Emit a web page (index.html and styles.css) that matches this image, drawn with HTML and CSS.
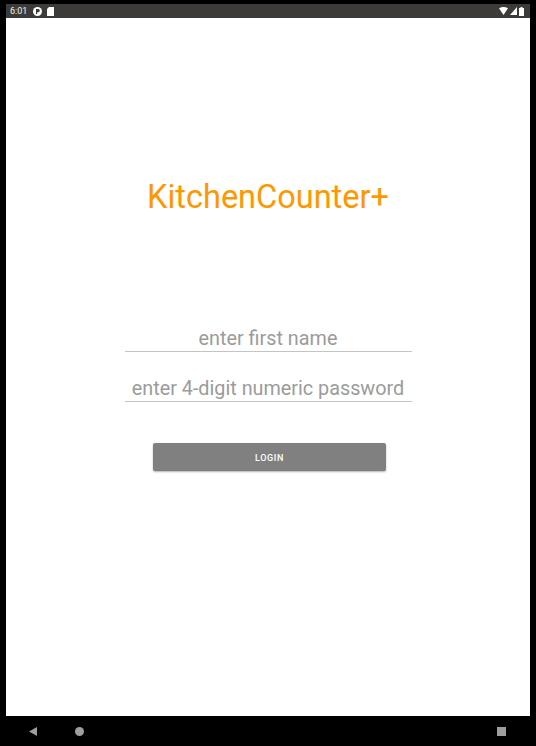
FILE: index.html
```html
<!DOCTYPE html>
<html>
<head>
<meta charset="utf-8">
<link rel="stylesheet" href="styles.css">
</head>
<body>
<div class="device">
  <div class="screen">
    <div class="statusbar">
      <div class="status-left">
        <span class="time">6:01</span>
        <svg class="ic" width="9" height="9" viewBox="0 0 9 9"><circle cx="4.5" cy="4.5" r="4.5" fill="#fff"/><path d="M3 2h2.2a1.6 1.6 0 0 1 0 3.2H4.2V7H3z" fill="#3c3b37"/></svg>
        <svg class="ic" width="7" height="9" viewBox="0 0 7 9"><path d="M2 0h5v9H0V2z" fill="#fff"/></svg>
      </div>
      <div class="status-right">
        <svg width="9" height="8" viewBox="0 0 9 8"><path d="M0 1.2Q4.5-1.2 9 1.2L4.5 8z" fill="#fff"/></svg>
        <svg width="7" height="8" viewBox="0 0 7 8"><path d="M7 0V8H0z" fill="#fff"/></svg>
        <svg width="5" height="9" viewBox="0 0 5 9"><path d="M1.5 0h2v1H5v8H0V1h1.5z" fill="#fff"/></svg>
      </div>
    </div>
    <div class="content">
      <h1 class="title">KitchenCounter+</h1>
      <div class="form">
        <input class="field" type="text" placeholder="enter first name">
        <input class="field" type="password" placeholder="enter 4-digit numeric password">
        <button class="login">LOGIN</button>
      </div>
    </div>
  </div>
  <div class="navbar">
    <svg class="nav-back" width="8" height="9" viewBox="0 0 8 9"><path d="M8 0V9L0 4.5z" fill="#9e9e9e"/></svg>
    <span class="nav-home"></span>
    <span class="nav-spacer"></span>
    <span class="nav-recent"></span>
  </div>
</div>
</body>
</html>
```
FILE: styles.css
```css
html, body {
  margin: 0;
  padding: 0;
  background: #000;
}
body {
  width: 536px;
  height: 746px;
  overflow: hidden;
  font-family: Roboto, "Noto Sans", sans-serif;
}
.device {
  display: flex;
  flex-direction: column;
  height: 746px;
}
.screen {
  margin: 4px 6px 0 6px;
  height: 712px;
  display: flex;
  flex-direction: column;
  background: #fff;
}
.statusbar {
  height: 14px;
  background: #3c3b37;
  display: flex;
  align-items: center;
  justify-content: space-between;
  padding: 0 6px 0 4px;
}
.status-left, .status-right {
  display: flex;
  align-items: center;
}
.status-left { gap: 5px; }
.status-right { gap: 2px; }
.time {
  color: #f2f2f2;
  font-size: 9px;
  line-height: 14px;
  margin-right: 1px;
}
.content {
  flex: 1;
  display: flex;
  flex-direction: column;
  align-items: center;
}
.title {
  margin: 160px 0 0 0;
  font-size: 32.5px;
  line-height: 38px;
  font-weight: 400;
  color: #ff9800;
}
.form {
  margin-top: 111px;
  display: flex;
  flex-direction: column;
  align-items: center;
}
.field {
  width: 287px;
  box-sizing: border-box;
  border: none;
  border-bottom: 1px solid #c4c4c4;
  padding: 0 0 1px 0;
  margin: 0 0 25px 0;
  font-family: Roboto, sans-serif;
  font-size: 19.8px;
  line-height: 23px;
  height: 25px;
  text-align: center;
  color: #333;
  outline: none;
  background: transparent;
}
.field::placeholder {
  color: #9b9b9b;
}
.login {
  margin: 16px 0 0 3px;
  width: 233px;
  height: 28px;
  border: none;
  border-radius: 2px;
  background: #808080;
  color: #fff;
  font-family: Roboto, sans-serif;
  font-size: 9px;
  font-weight: 500;
  letter-spacing: 0.6px;
  box-shadow: 0 1px 2px rgba(0,0,0,0.3);
  padding: 2px 0 0 0;
}
.navbar {
  flex: 1;
  display: flex;
  align-items: center;
  padding: 0 30px 0 29px;
}
.nav-back { display: block; }
.nav-home {
  width: 9px;
  height: 9px;
  border-radius: 50%;
  background: #9e9e9e;
  margin-left: 38px;
}
.nav-spacer { flex: 1; }
.nav-recent {
  width: 9px;
  height: 9px;
  background: #9e9e9e;
}
```
